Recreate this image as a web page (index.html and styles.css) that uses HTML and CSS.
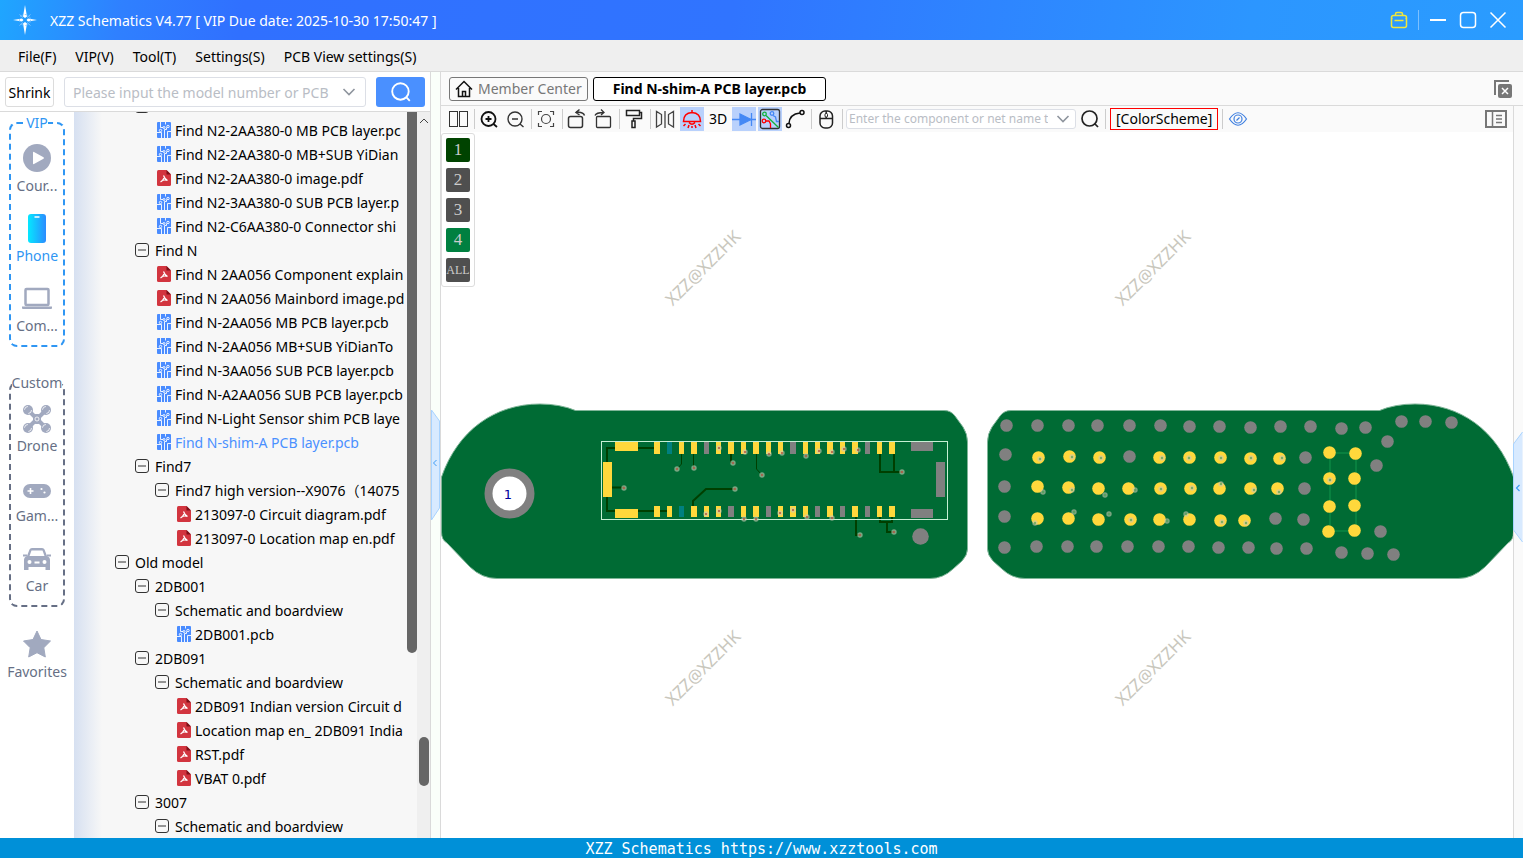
FILE: index.html
```html
<!DOCTYPE html>
<html lang="en">
<head>
    <meta charset="UTF-8">
    <meta name="viewport" content="width=device-width, initial-scale=1.0">
    <title>XZZ Schematics</title>
    <link rel="stylesheet" href="styles.css">
</head>
<body>
    <!-- Shared icons -->
    <svg class="sprite" aria-hidden="true">
        <symbol id="minus" viewBox="0 0 14 14">
            <rect x="0.5" y="0.5" width="13" height="13" rx="2.5" fill="none" stroke="#333"/>
            <path d="M3 7h8" stroke="#333"/>
        </symbol>
        <symbol id="pcb" viewBox="0 0 14 16">
            <rect width="14" height="16" rx="1" fill="#4a8cff"/>
            <g fill="none" stroke="#fff" stroke-width="0.900">
                <path d="M3.500 0V5.500H6M8.500 0V2.500M0 10.500H4.500V16M7.500 16V7.500M10.500 16V9.500H14M7.500 7.500H9.500V5.500"/>
                <circle cx="7" cy="5.500" r="1"/>
                <circle cx="11" cy="4.500" r="1.200"/>
                <circle cx="3.500" cy="8.500" r="1.200"/>
            </g>
        </symbol>
        <symbol id="pdf" viewBox="0 0 14 16">
            <path d="M1.500 0H9.500L14 4.500V14.500Q14 16 12.500 16H1.500Q0 16 0 14.500V1.500Q0 0 1.500 0Z" fill="#d2353f"/>
            <path d="M9.500 0V4.500H14Z" fill="#7c1018"/>
            <path d="M6.500 5.500Q7.500 8.500 10.500 10.500M7 8Q6 10.500 3.500 12M5 10.500Q8 9.500 10.500 10.500" fill="none" stroke="#fff" stroke-width="1.200"/>
        </symbol>
        <symbol id="chevron" viewBox="0 0 14 10">
            <path d="M1.500 2L7 7.500L12.500 2" fill="none" stroke="#8f959e" stroke-width="1.600"/>
        </symbol>
        <symbol id="search" viewBox="0 0 20 20">
            <circle cx="9.500" cy="9.500" r="7.500" fill="none" stroke="currentColor" stroke-width="1.700"/>
            <path d="M14.500 14.500L18 18" stroke="currentColor" stroke-width="1.700"/>
        </symbol>
    </svg>

    <header class="titlebar">
        <svg class="logo" viewBox="0 0 26 30" aria-hidden="true">
            <path d="M13 0L15 11.500L13 13L11 11.500ZM13 30L15 18.500L13 17L11 18.500ZM1 15L10 13.500L11.500 15L10 16.500ZM25 15L16 13.500L14.500 15L16 16.500Z" fill="#fff"/>
            <path d="M7.500 9.500L11 12.500M18.500 9.500L15 12.500M7.500 20.500L11 17.500M18.500 20.500L15 17.500" stroke="#7ec3ff"/>
            <circle cx="13" cy="15" r="5.500" fill="none" stroke="#7ec3ff" stroke-width="0.800" stroke-dasharray="3 2"/>
        </svg>
        <span class="title">XZZ Schematics V4.77 [ VIP Due date: 2025-10-30 17:50:47 ]</span>
        <div class="window-controls">
            <button type="button" aria-label="Toolbox">
                <svg width="18" height="18" viewBox="0 0 18 18" fill="none" stroke="#f1e73a" stroke-width="1.500">
                    <rect x="1.500" y="4.500" width="15" height="12" rx="2"/>
                    <path d="M5.500 4.500V3Q5.500 1.500 7 1.500H11Q12.500 1.500 12.500 3V4.500M4.500 9.500H13.500M1.500 7.500H2.500M15.500 7.500H16.500"/>
                </svg>
            </button>
            <span class="divider"></span>
            <button type="button" aria-label="Minimize">
                <svg width="18" height="18" viewBox="0 0 18 18"><path d="M1 9H17" stroke="#fff" stroke-width="2"/></svg>
            </button>
            <button type="button" aria-label="Maximize">
                <svg width="18" height="18" viewBox="0 0 18 18"><rect x="1.500" y="1.500" width="15" height="15" rx="3" fill="none" stroke="#fff" stroke-width="1.500"/></svg>
            </button>
            <button type="button" aria-label="Close">
                <svg width="18" height="18" viewBox="0 0 18 18"><path d="M1.500 1.500L16.500 16.500M16.500 1.500L1.500 16.500" stroke="#fff" stroke-width="1.500"/></svg>
            </button>
        </div>
    </header>

    <nav class="menubar">
        <button type="button">File(F)</button>
        <button type="button">VIP(V)</button>
        <button type="button">Tool(T)</button>
        <button type="button">Settings(S)</button>
        <button type="button">PCB View settings(S)</button>
    </nav>

    <main class="workspace">
        <section class="browser">
            <form class="search-row">
                <button type="button" class="shrink">Shrink</button>
                <div class="combo model-combo">
                    <input type="text" aria-label="Model number" placeholder="Please input the model number or PCB">
                    <svg width="14" height="10"><use href="#chevron"/></svg>
                </div>
                <button type="button" class="search-button" aria-label="Search">
                    <svg width="22" height="22"><use href="#search"/></svg>
                </button>
            </form>

            <div class="browser-body">
                <nav class="categories">
                    <div class="group group-vip">
                        <div class="group-title"><span>VIP</span></div>
                        <button type="button" class="category">
                            <svg viewBox="0 0 30 30"><circle cx="15" cy="15" r="14" fill="#a1a9bf"/><path d="M11 9.500V20.500Q11 21.500 12 21L21.500 15.800Q22.500 15 21.500 14.200L12 9Q11 8.500 11 9.500Z" fill="#fff"/></svg>
                            <span>Cour...</span>
                        </button>
                        <button type="button" class="category selected">
                            <svg viewBox="0 0 30 30">
                                <defs><linearGradient id="phone-fill"><stop offset="0" stop-color="#05e8ff"/><stop offset="1" stop-color="#2b8cff"/></linearGradient></defs>
                                <rect x="6" y="1" width="18" height="29" rx="3" fill="url(#phone-fill)"/>
                                <path d="M12.500 4H17.500" stroke="#fff" stroke-width="1.500"/>
                            </svg>
                            <span>Phone</span>
                        </button>
                        <button type="button" class="category">
                            <svg viewBox="0 0 30 30"><rect x="3.500" y="6" width="23" height="16" rx="1" fill="none" stroke="#a1a9bf" stroke-width="2.500"/><path d="M0 23.500H30V25Q30 26 29 26H1Q0 26 0 25Z" fill="#a1a9bf"/></svg>
                            <span>Com...</span>
                        </button>
                    </div>
                    <div class="group group-custom">
                        <div class="group-title"><span>Custom</span></div>
                        <button type="button" class="category">
                            <svg viewBox="0 0 30 30">
                                <path d="M6 7L24 25M24 7L6 25" stroke="#a1a9bf" stroke-width="4"/>
                                <g fill="#a1a9bf"><circle cx="6" cy="7" r="5"/><circle cx="24" cy="7" r="5"/><circle cx="6" cy="25" r="5"/><circle cx="24" cy="25" r="5"/><rect x="11" y="11" width="8" height="10" rx="3"/></g>
                                <g fill="none" stroke="#fff" stroke-width="0.800"><circle cx="6" cy="7" r="3.500" stroke-dasharray="5 6"/><circle cx="24" cy="7" r="3.500" stroke-dasharray="5 6"/><circle cx="6" cy="25" r="3.500" stroke-dasharray="5 6"/><circle cx="24" cy="25" r="3.500" stroke-dasharray="5 6"/><circle cx="15" cy="16" r="2"/></g>
                            </svg>
                            <span>Drone</span>
                        </button>
                        <button type="button" class="category">
                            <svg viewBox="0 0 30 30"><rect x="1" y="11" width="28" height="14" rx="7" fill="#a1a9bf"/><path d="M5.500 18H11.500M8.500 15V21" stroke="#fff" stroke-width="1.600"/><circle cx="19.500" cy="16" r="1.100" fill="#fff"/><circle cx="22.500" cy="19.500" r="1.100" fill="#fff"/></svg>
                            <span>Gam...</span>
                        </button>
                        <button type="button" class="category">
                            <svg viewBox="0 0 30 30">
                                <path d="M7.500 6.500Q8 5 10 5H20Q22 5 22.500 6.500L25 13Q28 14 28 17V27H23.500V24H6.500V27H2V17Q2 14 5 13Z" fill="#a1a9bf"/>
                                <path d="M9.500 7.500H20.500L22.500 13H7.500Z" fill="#fff"/>
                                <path d="M1 11.500H5V13.500H1ZM25 11.500H29V13.500H25Z" fill="#a1a9bf"/>
                                <circle cx="7.500" cy="19" r="2" fill="#fff"/><circle cx="22.500" cy="19" r="2" fill="#fff"/><path d="M12.500 19.500H17.500" stroke="#fff" stroke-width="2"/>
                            </svg>
                            <span>Car</span>
                        </button>
                    </div>
                    <button type="button" class="category favorites">
                        <svg viewBox="0 0 30 30"><path d="M15 2L19 10.500L28.500 12L21.800 18.700L23.300 28L15 23.700L6.700 28L8.200 18.700L1.500 12L11 10.500Z" fill="#a1a9bf" stroke="#a1a9bf" stroke-linejoin="round"/></svg>
                        <span>Favorites</span>
                    </button>
                </nav>

                <ul class="tree">
                    <li class="folder level-1"><svg><use href="#minus"/></svg>Find N2</li>
                    <li class="file level-2"><svg><use href="#pcb"/></svg>Find N2-2AA380-0 MB PCB layer.pc</li>
                    <li class="file level-2"><svg><use href="#pcb"/></svg>Find N2-2AA380-0 MB+SUB YiDian</li>
                    <li class="file level-2"><svg><use href="#pdf"/></svg>Find N2-2AA380-0 image.pdf</li>
                    <li class="file level-2"><svg><use href="#pcb"/></svg>Find N2-3AA380-0 SUB PCB layer.p</li>
                    <li class="file level-2"><svg><use href="#pcb"/></svg>Find N2-C6AA380-0 Connector shi</li>
                    <li class="folder level-1"><svg><use href="#minus"/></svg>Find N</li>
                    <li class="file level-2"><svg><use href="#pdf"/></svg>Find N 2AA056 Component explain</li>
                    <li class="file level-2"><svg><use href="#pdf"/></svg>Find N 2AA056 Mainbord image.pd</li>
                    <li class="file level-2"><svg><use href="#pcb"/></svg>Find N-2AA056 MB PCB layer.pcb</li>
                    <li class="file level-2"><svg><use href="#pcb"/></svg>Find N-2AA056 MB+SUB YiDianTo</li>
                    <li class="file level-2"><svg><use href="#pcb"/></svg>Find N-3AA056 SUB PCB layer.pcb</li>
                    <li class="file level-2"><svg><use href="#pcb"/></svg>Find N-A2AA056 SUB PCB layer.pcb</li>
                    <li class="file level-2"><svg><use href="#pcb"/></svg>Find N-Light Sensor shim PCB laye</li>
                    <li class="file level-2 current"><svg><use href="#pcb"/></svg>Find N-shim-A PCB layer.pcb</li>
                    <li class="folder level-1"><svg><use href="#minus"/></svg>Find7</li>
                    <li class="folder level-2"><svg><use href="#minus"/></svg>Find7 high version--X9076（14075</li>
                    <li class="file level-3"><svg><use href="#pdf"/></svg>213097-0 Circuit diagram.pdf</li>
                    <li class="file level-3"><svg><use href="#pdf"/></svg>213097-0 Location map en.pdf</li>
                    <li class="folder level-0"><svg><use href="#minus"/></svg>Old model</li>
                    <li class="folder level-1"><svg><use href="#minus"/></svg>2DB001</li>
                    <li class="folder level-2"><svg><use href="#minus"/></svg>Schematic and boardview</li>
                    <li class="file level-3"><svg><use href="#pcb"/></svg>2DB001.pcb</li>
                    <li class="folder level-1"><svg><use href="#minus"/></svg>2DB091</li>
                    <li class="folder level-2"><svg><use href="#minus"/></svg>Schematic and boardview</li>
                    <li class="file level-3"><svg><use href="#pdf"/></svg>2DB091 Indian version Circuit d</li>
                    <li class="file level-3"><svg><use href="#pdf"/></svg>Location map en_ 2DB091 India</li>
                    <li class="file level-3"><svg><use href="#pdf"/></svg>RST.pdf</li>
                    <li class="file level-3"><svg><use href="#pdf"/></svg>VBAT 0.pdf</li>
                    <li class="folder level-1"><svg><use href="#minus"/></svg>3007</li>
                    <li class="folder level-2"><svg><use href="#minus"/></svg>Schematic and boardview</li>
                </ul>
                <div class="tree-scroll"><div class="thumb"></div></div>
                <div class="panel-scroll">
                    <svg width="10" height="18" viewBox="0 0 10 18"><path d="M1 11L5 7L9 11" fill="none" stroke="#444"/></svg>
                    <div class="thumb"></div>
                </div>
            </div>
        </section>

        <div class="splitter">
            <svg width="9" height="110" viewBox="0 0 9 110"><path d="M0.500 0L8.500 11V98L0.500 110Z" fill="#d8eaff" stroke="#a8d3ff"/><path d="M5.500 50L2.500 53L5.500 56" fill="none" stroke="#3e9cf5"/></svg>
        </div>

        <section class="viewer">
            <div class="tabs">
                <button type="button" class="tab home">
                    <svg width="18" height="18" viewBox="0 0 18 18" fill="none" stroke="#111" stroke-width="1.500"><path d="M1 9.500L9 1.500L17 9.500M3.500 8V16.500H14.500V8"/><path d="M7.500 16V11.500H10.500V16"/></svg>
                    Member Center
                </button>
                <button type="button" class="tab active">Find N-shim-A PCB layer.pcb</button>
                <button type="button" class="close-all" aria-label="Close all tabs">
                    <svg width="18" height="18" viewBox="0 0 18 18"><path d="M1 15V1H15" fill="none" stroke="#777" stroke-width="2"/><rect x="4" y="4" width="14" height="14" rx="2" fill="#777"/><path d="M8 8L14 14M14 8L8 14" stroke="#fff" stroke-width="1.500"/></svg>
                </button>
            </div>

            <div class="viewer-body">
                <div class="viewer-main">
                    <div class="toolbar">
                        <button type="button" class="tool" aria-label="Split view">
                            <svg viewBox="0 0 24 24" fill="none" stroke="#333"><rect x="2.500" y="4.500" width="8" height="15"/><rect x="12.500" y="4.500" width="8" height="15"/></svg>
                        </button>
                        <span class="sep"></span>
                        <button type="button" class="tool" aria-label="Zoom in">
                            <svg viewBox="0 0 24 24" fill="none" stroke="#111" stroke-width="1.800"><circle cx="10.500" cy="12" r="7"/><path d="M15.500 17L19 20M7.500 12H13.500M10.500 9V15"/></svg>
                        </button>
                        <button type="button" class="tool" aria-label="Zoom out">
                            <svg viewBox="0 0 24 24" fill="none" stroke="#333" stroke-width="1.400"><circle cx="11" cy="12" r="7"/><path d="M16 17L19.500 20M8 12H14"/></svg>
                        </button>
                        <span class="sep"></span>
                        <button type="button" class="tool" aria-label="Fit">
                            <svg viewBox="0 0 24 24" fill="none" stroke="#444" stroke-width="1.200"><circle cx="11" cy="12" r="4.500"/><path d="M3.500 8V4.500H7M15 4.500H18.500V8M3.500 16V19.500H7M15 19.500H18.500V16"/></svg>
                        </button>
                        <span class="sep"></span>
                        <button type="button" class="tool" aria-label="Rotate left">
                            <svg viewBox="0 0 24 24" fill="none" stroke="#333" stroke-width="1.500"><rect x="2.500" y="9.500" width="14" height="11" rx="2"/><path d="M10 5.500Q17 4.500 18.500 8.500M13.500 2.500L10 5.500L13.500 8"/></svg>
                        </button>
                        <button type="button" class="tool" aria-label="Rotate right">
                            <svg viewBox="0 0 24 24" fill="none" stroke="#333" stroke-width="1.300"><rect x="4.500" y="9.500" width="14" height="11" rx="1"/><path d="M3 8.500Q4 5.500 12 5.500M9 2.500L12 5.500L9 8"/></svg>
                        </button>
                        <span class="sep"></span>
                        <button type="button" class="tool" aria-label="Paint">
                            <svg viewBox="0 0 24 24" fill="none" stroke="#222" stroke-width="1.500"><rect x="3.500" y="3.500" width="13" height="5"/><path d="M16.500 5.500H18.500V11.500H10.500V14"/><rect x="9" y="14" width="3" height="6.500"/></svg>
                        </button>
                        <span class="sep"></span>
                        <button type="button" class="tool" aria-label="Mirror">
                            <svg viewBox="0 0 24 24" fill="none" stroke="#444" stroke-width="1.300"><path d="M2.500 4.500V20L7.500 17V7.500ZM19.500 4.500V20L14.500 17V7.500ZM11 4V21"/></svg>
                        </button>
                        <button type="button" class="tool on" aria-label="Highlight">
                            <svg viewBox="0 0 24 24" fill="none" stroke="#f00" stroke-width="1.500"><path d="M3.500 14.500Q3.500 6 12 5.500Q20.500 6 20.500 14.500ZM12 3V5.500M9 15.500Q12 19 15 15.500M5.500 17L3.500 19M9 18L8 21M15 18L16 21M18.500 17L20.500 19M12 19V21"/></svg>
                        </button>
                        <button type="button" class="tool tool-3d">3D</button>
                        <button type="button" class="tool on" aria-label="Diode">
                            <svg viewBox="0 0 24 24" fill="#4589f5" stroke="#4589f5" stroke-width="1.300"><path d="M0 12.500H24M19.500 6V19"/><path d="M8 7V18L19 12.500Z"/></svg>
                        </button>
                        <button type="button" class="tool on" aria-label="Net lines">
                            <svg viewBox="0 0 24 24" fill="none" stroke-width="1.300"><rect x="2.500" y="2.500" width="19" height="19" rx="2" stroke="#333"/><path d="M8 8.500L20.500 20.500" stroke="#12b33c"/><circle cx="6.500" cy="7" r="1.800" stroke="#12b33c"/><path d="M15 8.500L17.500 10L18.500 14.500H21" stroke="#4589f5"/><circle cx="14" cy="6.500" r="1.800" stroke="#4589f5"/><path d="M8 14H11L12.500 17V21" stroke="#f00"/><circle cx="6" cy="14" r="1.800" stroke="#f00"/></svg>
                        </button>
                        <button type="button" class="tool" aria-label="Curve">
                            <svg viewBox="0 0 24 24" fill="none" stroke="#111" stroke-width="1.500"><circle cx="4.500" cy="18.500" r="2"/><circle cx="18" cy="5.500" r="2"/><path d="M5 16.500Q5.500 7 16 6"/></svg>
                        </button>
                        <span class="sep"></span>
                        <button type="button" class="tool" aria-label="Mouse">
                            <svg viewBox="0 0 24 24" fill="none" stroke="#222" stroke-width="1.500"><rect x="5" y="4" width="12.500" height="17" rx="5"/><path d="M5 11.500H17.500M11.200 4V11.500"/><rect x="10" y="6.500" width="2.500" height="3.500" rx="1" fill="#fff" stroke-width="1"/></svg>
                        </button>
                        <span class="sep"></span>
                        <div class="combo net-combo">
                            <input type="text" aria-label="Component or net name" placeholder="Enter the component or net name to search">
                            <svg width="14" height="10"><use href="#chevron"/></svg>
                        </div>
                        <button type="button" class="tool" aria-label="Search net">
                            <svg viewBox="-2 -2 24 24" color="#222"><use href="#search" width="20" height="20"/></svg>
                        </button>
                        <span class="sep"></span>
                        <button type="button" class="color-scheme">[ColorScheme]</button>
                        <span class="sep"></span>
                        <button type="button" class="tool" aria-label="Visibility">
                            <svg viewBox="0 0 24 24" fill="none" stroke="#3e7fe0" stroke-width="1.200"><path d="M3.500 12Q12 -0.500 20.500 12Q12 24.500 3.500 12Z"/><circle cx="12" cy="12" r="4"/><path d="M10.500 13.500L13.500 10.500"/></svg>
                        </button>
                        <button type="button" class="side-toggle" aria-label="Side panel">
                            <svg width="22" height="18" viewBox="0 0 22 18" fill="none" stroke="#777"><rect x="1" y="1" width="20" height="16" stroke-width="2"/><path d="M7.500 1V17" stroke-width="1.500"/><path d="M11 5.500H17M11 9H17M11 12.500H17" stroke-width="1.500"/></svg>
                        </button>
                    </div>

                    <div class="canvas">
                        <svg class="board" viewBox="441 132 1072 706" preserveAspectRatio="xMidYMid meet">
                            <defs>
                                <path id="outline" d="M575.500 410.500H944Q951 410.500 955 416L963 427Q967.500 434 967.500 442V549Q967.500 555 962 561L953 569Q943 578.500 930 578.500H497Q482 578.500 470 567L447 543Q441.500 540 441.500 532V477C458 430 495 404 540 404Q560 404 575.500 410.500Z"/>
                            </defs>
                            <g class="substrate">
                                <use href="#outline"/>
                                <use href="#outline" transform="translate(1955 0) scale(-1 1)"/>
                            </g>
                            <circle cx="509.500" cy="493.500" r="21" class="ring"/>
                            <text x="508" y="499" class="pin-label">1</text>
                            <g class="trace">
                                <path d="M654 448H607V511H667M611 487.500H624M731 454V463M693 506V501L706 489H735M880 454V472H902M894 454V472M856 517V535H860M880 517V522H892V517M887 522V532H894"/>
                                <path class="thin" d="M681.500 454V464L677 469M693.500 454V468M756.500 454V469L762 475"/>
                            </g>
                            <path class="trace-light" d="M1330 453H1356V531H1330Z"/>
                            <g id="pads"></g>
                            <rect class="part-outline" x="601.500" y="441.500" width="346" height="78"/>
                            <g id="vias"></g>
                            <g class="watermark">
                                <text transform="translate(703 268) rotate(-45)" y="6">XZZ@XZZHK</text>
                                <text transform="translate(1153 268) rotate(-45)" y="6">XZZ@XZZHK</text>
                                <text transform="translate(703 668) rotate(-45)" y="6">XZZ@XZZHK</text>
                                <text transform="translate(1153 668) rotate(-45)" y="6">XZZ@XZZHK</text>
                            </g>
                        </svg>
                        <div class="layers">
                            <button type="button" class="layer top">1</button>
                            <button type="button" class="layer">2</button>
                            <button type="button" class="layer">3</button>
                            <button type="button" class="layer bottom">4</button>
                            <button type="button" class="layer all">ALL</button>
                        </div>
                    </div>
                </div>
                <div class="side-strip">
                    <svg width="10" height="110" viewBox="0 0 10 110"><path d="M9.500 0L0.500 12V98L9.500 110Z" fill="#d8eaff"/><path d="M9.500 0L0.500 12V98L9.500 110" fill="none" stroke="#a8d3ff"/><path d="M6.500 53L3.500 56L6.500 59" fill="none" stroke="#3e9cf5" stroke-width="1.200"/></svg>
                </div>
            </div>
        </section>
    </main>

    <footer>XZZ Schematics https://www.xzztools.com</footer>

    <script src="board.js"></script>
</body>
</html>
```

FILE: styles.css
```css
* {
    margin: 0;
    padding: 0;
    box-sizing: border-box;
}

body {
    display: flex;
    flex-direction: column;
    height: 100vh;
    overflow: hidden;
    font-family: 'Noto Sans', 'Noto Sans CJK SC', sans-serif;
    font-size: 14px;
    line-height: 20px;
    color: #000;
    background: #fff;
}

button,
input {
    font: inherit;
    color: inherit;
    border: none;
    background: none;
}

button {
    cursor: pointer;
    white-space: nowrap;
}

svg {
    display: block;
    flex-shrink: 0;
}

.sprite {
    display: none;
}

/* Title bar */
.titlebar {
    display: flex;
    align-items: center;
    height: 40px;
    flex-shrink: 0;
    padding: 0 16px 0 12px;
    color: #fff;
    background: linear-gradient(100deg, #1fa6ff 0%, #2f80ff 8%, #3070ff 16%, #3074ff 48%, #2c96ff 82%, #2a9cff 100%);
}

.logo {
    width: 26px;
    height: 30px;
    margin-right: 12px;
}

.title {
    padding-top: 1px;
}

.window-controls {
    display: flex;
    align-items: center;
    gap: 12px;
    margin-left: auto;
}

.window-controls .divider {
    width: 1px;
    height: 20px;
    margin: 0 -2px;
    background: #7cc0ff;
}

/* Menu bar */
.menubar {
    display: flex;
    align-items: center;
    gap: 19px;
    height: 32px;
    flex-shrink: 0;
    padding: 2px 18px 0;
    background: #efefef;
    border-bottom: 1px solid #dadada;
}

.workspace {
    display: flex;
    flex: 1;
    min-height: 0;
}

/* Left panel */
.browser {
    display: flex;
    flex-direction: column;
    width: 431px;
    flex-shrink: 0;
    border-right: 1px solid #dadada;
}

.search-row {
    display: flex;
    align-items: center;
    gap: 10px;
    height: 40px;
    flex-shrink: 0;
    padding: 0 5px;
    border-bottom: 1px solid #dadada;
}

.shrink {
    width: 49px;
    height: 30px;
    padding-top: 2px;
    border: 1px solid #dcdcdc;
    border-radius: 3px;
}

.combo {
    display: flex;
    align-items: center;
    background: #fff;
    border: 1px solid #dcdfe6;
    border-radius: 3px;
}

.combo input {
    flex: 1;
    min-width: 0;
    outline: none;
}

.combo input::placeholder {
    color: #b9bdc5;
    opacity: 1;
}

.model-combo {
    flex: 1;
    height: 30px;
    padding: 0 9px 0 8px;
    gap: 8px;
}

.model-combo input {
    padding-top: 2px;
}

.search-button {
    display: flex;
    align-items: center;
    justify-content: center;
    width: 49px;
    height: 30px;
    color: #fff;
    background: #4a90ff;
    border-radius: 3px;
}

.browser-body {
    display: flex;
    flex: 1;
    min-height: 0;
    background: #f7f7f7;
}

.categories {
    width: 74px;
    flex-shrink: 0;
    padding: 10px 9px 0;
    background: #fff;
    overflow: hidden;
}

.group {
    margin-bottom: 35px;
    padding-bottom: 2px;
    width: 56px;
    border: 2px dashed #2f96f3;
    border-radius: 8px;
}

.group-title {
    display: flex;
    justify-content: center;
    height: 20px;
    margin-top: -11px;
    color: #2f96f3;
}

.group-title span {
    background: #fff;
}

.group-custom {
    margin-bottom: 12px;
    border-color: #666f85;
}

.group-custom .group-title {
    color: #666f85;
}

.category {
    display: flex;
    flex-direction: column;
    align-items: center;
    gap: 3px;
    width: 100%;
    height: 70px;
    padding-top: 10px;
    color: #666f85;
}

.category svg {
    width: 30px;
    height: 30px;
}

.category.selected {
    color: #2f96f3;
}

.favorites {
    width: 56px;
}

/* File tree */
.tree {
    flex: 1;
    min-width: 0;
    overflow: hidden;
    list-style: none;
    background: linear-gradient(90deg, #d6e0f1, #f7f7f7 28px);
}

.tree li {
    display: flex;
    align-items: center;
    height: 24px;
    white-space: nowrap;
}

/* list is scrolled part of a row down */
.tree li:first-child {
    margin-top: -17px;
}

.tree svg {
    width: 14px;
    height: 16px;
}

.folder svg {
    margin: 0 6px 2px 0;
}

.file svg {
    margin: 0 4px 2px 2px;
}

.level-0 {
    padding-left: 41px;
}

.level-1 {
    padding-left: 61px;
}

.level-2 {
    padding-left: 81px;
}

.level-3 {
    padding-left: 101px;
}

.current {
    color: #4a90ff;
}

.tree-scroll {
    width: 11px;
    padding-left: 1px;
}

.tree-scroll .thumb {
    width: 10px;
    height: 541px;
    background: #666;
    border-radius: 0 0 5px 5px;
}

.panel-scroll {
    display: flex;
    flex-direction: column;
    align-items: center;
    width: 13px;
    background: #efefef;
}

.panel-scroll .thumb {
    width: 10px;
    height: 49px;
    margin: auto 0 52px;
    background: #666;
    border-radius: 5px;
}

.splitter {
    display: flex;
    align-items: center;
    width: 9px;
    flex-shrink: 0;
    padding-top: 20px;
    background: #fafffa;
}

/* Viewer */
.viewer {
    display: flex;
    flex-direction: column;
    flex: 1;
    min-width: 0;
    border-left: 1px solid #dadada;
}

.tabs {
    display: flex;
    align-items: center;
    gap: 5px;
    height: 34px;
    flex-shrink: 0;
    padding: 0 11px 0 8px;
    background: #fafafa;
    border-bottom: 1px solid #dadada;
}

.tab {
    display: flex;
    align-items: center;
    gap: 5px;
    height: 24px;
    padding: 0 5px;
    border: 1px solid #777;
    border-radius: 3px;
    color: #777;
}

.tab.active {
    padding: 0 19px;
    font-weight: bold;
    color: #000;
    border-color: #000;
    background: #fff;
}

.close-all {
    margin-left: auto;
}

.viewer-body {
    display: flex;
    flex: 1;
    min-height: 0;
}

.viewer-main {
    display: flex;
    flex-direction: column;
    flex: 1;
    min-width: 0;
}

.toolbar {
    display: flex;
    align-items: center;
    gap: 2px;
    height: 26px;
    flex-shrink: 0;
    padding: 0 6px;
    background: #fafafa;
}

.tool {
    width: 24px;
    height: 24px;
    flex-shrink: 0;
}

.tool svg {
    width: 24px;
    height: 24px;
}

.tool.on {
    background: #b9d1fc;
}

.sep {
    width: 1px;
    height: 20px;
    flex-shrink: 0;
    margin: 0 1px;
    background: #ccc;
}

.net-combo {
    width: 230px;
    height: 20px;
    padding: 0 5px 0 2px;
    gap: 8px;
    font-size: 12px;
}

.color-scheme {
    height: 22px;
    margin: 0 1px;
    padding: 0 5px;
    border: 1px solid #f00;
}

.side-toggle {
    margin-left: auto;
}

/* Board canvas */
.canvas {
    position: relative;
    flex: 1;
    min-height: 0;
}

.board {
    width: 100%;
    height: 100%;
}

.substrate {
    fill: #006b34;
    stroke: #7fb598;
}

.ring {
    fill: #fff;
    stroke: #808080;
    stroke-width: 8px;
}

.pin-label {
    font-family: 'DejaVu Sans', sans-serif;
    font-size: 13px;
    text-anchor: middle;
    fill: #00009c;
}

.trace {
    fill: none;
    stroke: #003f00;
    stroke-width: 2px;
}

.thin {
    stroke-width: 1px;
}

.trace-light {
    fill: none;
    stroke: #08803f;
    stroke-width: 2px;
}

.pad {
    fill: #ffd83c;
}

.pad.nc {
    fill: #808080;
}

.pad.signal {
    fill: #008080;
}

.part-outline {
    fill: none;
    stroke: #c6f0d4;
}

.via {
    fill: #c9c9b4;
    fill-opacity: 0.6;
}

.via-core {
    fill: #b5533f;
}

.via-core.ground {
    fill: #4f9f52;
    fill-opacity: 0.7;
}

.watermark {
    font-size: 17px;
    text-anchor: middle;
    fill: #c9c7bd;
}

.layers {
    position: absolute;
    top: 1px;
    left: 0;
    display: flex;
    flex-direction: column;
    gap: 6px;
    padding: 4px;
    background: #fff;
    border: 1px solid #dcdcdc;
    border-radius: 3px;
}

.layer {
    width: 24px;
    height: 24px;
    font-family: 'Liberation Serif', serif;
    font-size: 17px;
    color: #ccc;
    background: #4f4f4f;
    border-radius: 2px;
}

.layer.top {
    background: #004300;
}

.layer.bottom {
    background: #008040;
}

.layer.all {
    font-size: 12px;
}

.side-strip {
    display: flex;
    align-items: center;
    width: 10px;
    flex-shrink: 0;
    padding-top: 30px;
    background: #fafafa;
    box-shadow: inset 1px 0 #dadada;
}

footer {
    height: 20px;
    flex-shrink: 0;
    font-family: 'DejaVu Sans Mono', monospace;
    font-size: 15px;
    line-height: 22px;
    text-align: center;
    color: #fff;
    background: #0090d8;
}
```

FILE: board.js
```js
const NS = 'http://www.w3.org/2000/svg';
const pads = document.getElementById('pads');
const vias = document.getElementById('vias');

function add(parent, tag, className, attrs) {
    const el = document.createElementNS(NS, tag);
    el.setAttribute('class', className);
    for (const name in attrs) {
        el.setAttribute(name, attrs[name]);
    }
    parent.appendChild(el);
}

const kinds = { y: 'pad', g: 'pad nc', t: 'pad signal' };

// Connector pins, left to right
const pinX = [654, 667, 679, 691, 704, 716, 728, 741, 753, 766, 778, 790, 803, 815, 827, 840, 852, 865, 877, 889];
const wide = [654, 691, 728, 753, 790, 827, 852, 889];
const rows = [
    { y: 442, height: 12, pins: 'ytyygyyyyyygyyyyygyy' },
    { y: 506, height: 11, pins: 'yytyyygyygyyygygygyy' }
];
rows.forEach(row => {
    pinX.forEach((x, i) => {
        add(pads, 'rect', kinds[row.pins[i]], {
            x: x, y: row.y, width: wide.includes(x) ? 6 : 5, height: row.height
        });
    });
});

// Shield pads around the connector
[
    [615, 442, 23, 9, 'y'], [603, 462, 9, 35, 'y'], [615, 509, 23, 9, 'y'],
    [911, 442, 22, 9, 'g'], [936, 462, 9, 35, 'g'], [911, 509, 22, 9, 'g']
].forEach(([x, y, width, height, kind]) => {
    add(pads, 'rect', kinds[kind], { x, y, width, height });
});

add(pads, 'circle', 'pad nc', { cx: 920.5, cy: 536.5, r: 8.3 });

const grayPads = [
    [1006, 425], [1037, 425], [1068, 425], [1097, 425], [1129, 425], [1160, 425], [1189, 426], [1219, 426],
    [1250, 427], [1280, 426], [1310, 426], [1341, 428], [1365, 427], [1401, 421], [1425, 421], [1451, 422],
    [1387, 441], [1376, 465], [1380, 531], [1005, 454], [1004, 486], [1004, 516], [1004, 547], [1129, 456],
    [1305, 457], [1304, 488], [1275, 518], [1303, 519], [1036, 546], [1067, 546], [1096, 546], [1127, 546],
    [1158, 546], [1188, 546], [1218, 547], [1248, 547], [1276, 548], [1306, 548], [1341, 552], [1367, 553],
    [1393, 554]
];
const yellowPads = [
    [1038, 457], [1069, 456], [1099, 457], [1159, 457], [1189, 457], [1220, 457], [1250, 458], [1279, 458],
    [1037, 486], [1068, 487], [1098, 488], [1128, 488], [1160, 488], [1190, 488], [1219, 488], [1250, 488],
    [1277, 488], [1037, 518], [1068, 518], [1098, 519], [1130, 519], [1159, 519], [1189, 519], [1220, 520],
    [1244, 520], [1329, 452], [1355, 453], [1329, 478], [1354, 478], [1329, 506], [1354, 505], [1328, 531],
    [1354, 530]
];
grayPads.forEach(([x, y]) => add(pads, 'circle', 'pad nc', { cx: x + 0.5, cy: y + 0.5, r: 6.3 }));
yellowPads.forEach(([x, y]) => add(pads, 'circle', 'pad', { cx: x + 0.5, cy: y + 0.5, r: 6.3 }));

const leftVias = [
    [677, 469], [694, 468], [624, 488], [719, 448], [706, 514], [719, 511], [733, 463], [745, 452], [762, 475],
    [769, 454], [782, 453], [806, 456], [819, 451], [832, 452], [844, 449], [858, 450], [902, 472], [735, 489],
    [860, 535], [894, 532], [744, 519], [756, 519], [780, 513], [793, 510], [807, 517], [832, 518]
];
const rightVias = [
    [1040, 459], [1072, 457], [1101, 458], [1162, 458], [1189, 458], [1221, 458], [1251, 458], [1282, 458],
    [1043, 492], [1072, 490], [1105, 495], [1135, 490], [1161, 489], [1192, 488], [1221, 484], [1254, 490],
    [1279, 492], [1035, 523], [1074, 512], [1109, 514], [1131, 520], [1167, 521], [1186, 514], [1222, 522],
    [1246, 523], [1330, 480]
];
leftVias.forEach(([x, y]) => {
    add(vias, 'circle', 'via', { cx: x, cy: y, r: 2.7 });
    add(vias, 'circle', 'via-core', { cx: x, cy: y, r: 1 });
});
rightVias.forEach(([x, y]) => {
    add(vias, 'circle', 'via', { cx: x, cy: y, r: 2.7 });
    add(vias, 'circle', 'via-core ground', { cx: x, cy: y, r: 1.2 });
});
```
